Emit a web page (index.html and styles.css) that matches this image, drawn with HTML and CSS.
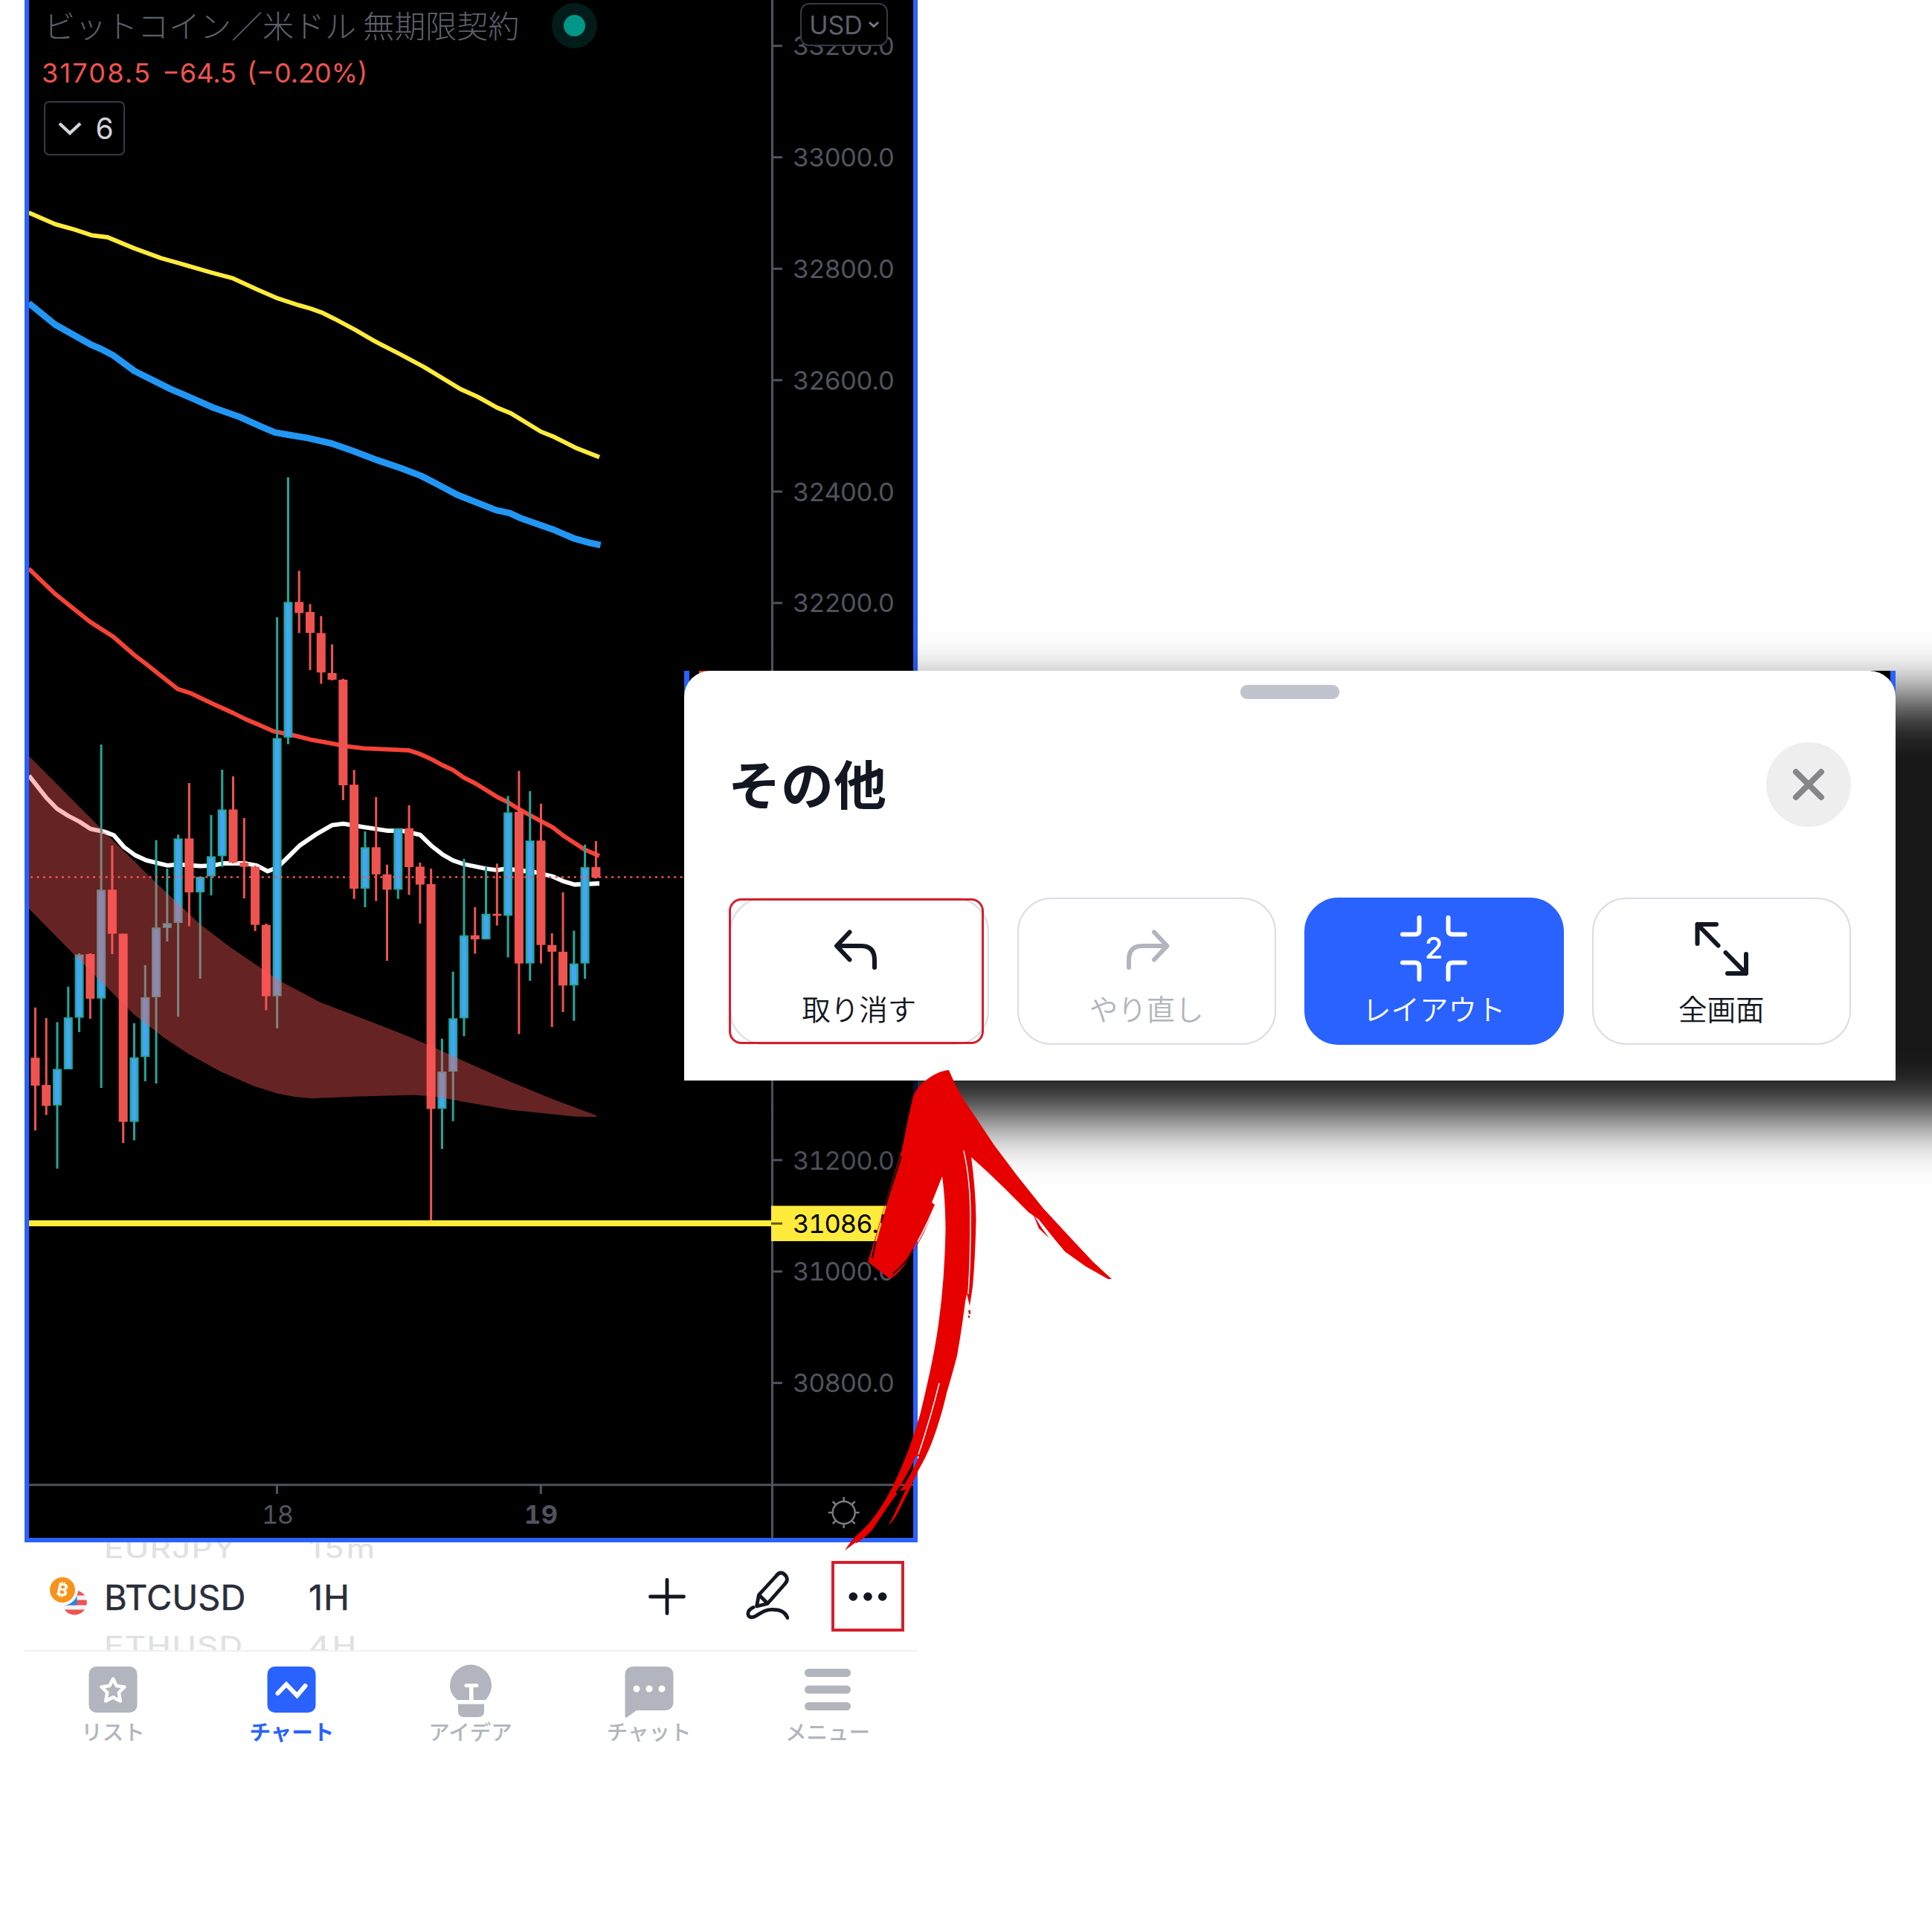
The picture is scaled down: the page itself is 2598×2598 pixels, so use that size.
FILE: index.html
```html
<!DOCTYPE html>
<html lang="ja">
<head>
    <meta charset="UTF-8">
    <meta name="viewport" content="width=device-width, initial-scale=1.0">
    <title>BTCUSD チャート</title>
    <link rel="stylesheet" href="styles.css">
</head>
<body>
    <div class="phone">
        <div class="chart">
            <svg class="chart-canvas" viewBox="39 0 1189 2068">
                <!-- moving averages -->
                <polyline class="ma ma-yellow" points="38.6,285.9 74,301.4 100.4,308.8 123,316.3 144.6,319 180.8,334 217,347.3 241,354 285,366.8 313.4,374.3 345.5,389.2 373.7,401.3 401.8,410.4 417.9,415 434,420.8 450,428.8 478,443.7 504.7,459.2 538.4,476.5 570.6,493.7 618.8,523 642.9,533.9 668.6,548.2 687,555.7 727.3,580.4 745.7,587.8 775.5,602.8 806,614.8"/>
                <polyline class="ma ma-blue" points="38.6,407.6 74,436.3 123,463.8 136.6,469.6 152.7,478.2 180.8,498.9 229,523 257,535 285.3,547.6 321.4,560.3 349.6,572.9 369.7,581.5 385.7,584.4 413.9,589 446,596.4 474,606.2 506,618.3 538,629.2 566.5,640 586.6,650.4 614.8,665.3 667,686 685.5,690 699,696.3 743,711.8 771.5,723.9 791.5,729.6 807.6,733"/>
                <polyline class="ma ma-red" points="38.6,764.6 74,798.5 120.5,835.8 152.7,856.5 180.8,881 196.7,893 213,906 239,926.5 256.7,932.3 286.7,946.6 313,958.5 330,967 346.7,974 368,983.3 393,988.4 416.7,994.3 446.7,999.8 466.7,1003.6 490,1006.3 536.7,1008.4 550,1009 565,1014 580,1020.8 595,1029 609,1035.3 623.7,1045.6 640,1053.9 668.7,1071.8 683,1078.7 697,1087.6 727,1104 743,1112.4 758,1124 786.7,1142.7 806,1151"/>
                <polyline class="ma ma-white" points="39,1043 62.3,1072.8 76.7,1087.5 91.7,1097 107,1105 121.7,1114.6 140,1118.3 153.3,1123.3 166.7,1139 181.7,1150 196.7,1156.9 225,1163.8 239,1162.4 270,1164.7 286.7,1163.8 300,1161 330,1161 345,1163.8 360,1171.6 373,1166.5 383,1156.9 403,1137 425,1122 446.7,1109.6 461.7,1107.7 490,1112.4 521.7,1117.2 540,1117 565,1122.7 580,1137.2 595,1148.9 609,1157 623.7,1162 653,1168 668.7,1170.2 680,1168.2 695,1170 720,1173 743,1178.5 756.7,1184.7 772.3,1189.5 806,1188"/>

                <g id="candles"></g>

                <!-- cloud -->
                <path class="cloud" d="M39,1016.8 L136.7,1115 L206.7,1184 L269,1242.7 L310,1274 L353,1303.3 L380,1321 L430,1347.4 L480,1366.7 L540,1390 L583,1407.9 L623,1426.4 L686.7,1454.7 L740,1476.7 L802,1500 L802,1502 L773,1501.5 L686.7,1492.6 L620,1480.9 L586.7,1474.7 L556.7,1472.6 L480,1474.6 L420,1477 L396.7,1475 L373,1470.5 L340,1460 L296.7,1441 L253,1417 L220,1395 L180,1364 L160,1344 L100,1284 L39,1222 Z"/>

                <line class="last-price" x1="41" y1="1179.5" x2="1037" y2="1179.5"/>
                <line class="level" x1="39" y1="1645" x2="1037" y2="1645"/>

                <!-- axes -->
                <path class="axis" d="M1038.5,0 V2068 M39,1996.8 H1228 M372.5,1998 V2009 M727.3,1998 V2009"/>
                <g id="scale"></g>
                <rect class="level-tag" x="1037" y="1621.5" width="191" height="47.5"/>
                <path class="level-tick" d="M1037,1645.3 H1052"/>
                <text class="tick level-text" x="1066" y="1657.5" textLength="137">31086.5</text>
                <text class="tick" x="352" y="2048.500" textLength="43">18</text>
                <text class="tick tick-bold" x="705" y="2048.500" textLength="45">19</text>

                <g class="gear" transform="translate(1134.7 2034)">
                    <circle r="15"/>
                    <path d="M0-15V-21 M0 15V21 M-15 0H-21 M15 0H21 M-10.6-10.6L-15-15 M10.6-10.6L15-15 M-10.6 10.6L-15 15 M10.6 10.6L15 15"/>
                </g>
            </svg>

            <div class="legend">
                <div class="legend-title">
                    <span>ビットコイン／米ドル 無期限契約</span>
                    <i class="status"></i>
                </div>
                <div class="legend-price">
                    <span class="last">31708.5</span>
                    <span>−64.5</span>
                    <span>(−0.20%)</span>
                </div>
                <button class="collapse">
                    <svg width="36" height="24" viewBox="0 0 36 24"><path d="M4 5L18 18L32 5"/></svg>
                    6
                </button>
            </div>

            <button class="currency">
                USD
                <svg width="18" height="12" viewBox="0 0 18 12"><path d="M3 3L9 8.5L15 3"/></svg>
            </button>
        </div>

        <div class="toolbar">
            <svg class="pair" width="72" height="72" viewBox="0 0 72 72">
                <defs>
                    <clipPath id="flag"><circle cx="41.3" cy="44" r="16.5"/></clipPath>
                </defs>
                <g clip-path="url(#flag)">
                    <rect x="20" y="24" width="40" height="40" fill="#f0f3fa"/>
                    <path fill="#ef5350" d="M20 28H60V34.500H20Z M20 40.500H60V47.500H20Z M20 53.500H60V62H20Z"/>
                    <rect x="20" y="24" width="24.500" height="23.500" fill="#1e88e5"/>
                </g>
                <circle cx="25" cy="27" r="21" fill="#fff"/>
                <circle cx="25" cy="27" r="17" fill="#f7931a"/>
                <text class="coin" x="25" y="35" transform="rotate(12 25 27)">₿</text>
            </svg>
            <div class="wheel wheel-symbol">
                <span class="dim">EURJPY</span>
                <span class="current">BTCUSD</span>
                <span class="dim">ETHUSD</span>
            </div>
            <div class="wheel wheel-interval">
                <span class="dim">15m</span>
                <span class="current">1H</span>
                <span class="dim">4H</span>
            </div>
            <div class="tools">
                <svg width="60" height="70" viewBox="-30 -35 60 70"><path d="M-22.500 0H22.500 M0-22.500V22.500"/></svg>
                <svg width="60" height="70" viewBox="0 0 60 70">
                    <path d="M16.500 48L19.500 32.500L42.500 7.500Q49-1.500 56 7.500Q59.500 13 54 18.500L31 44.500Z M20 33L31 44"/>
                    <path d="M12 49.500C2 54 3 64.500 12 62.500C19 60 26 51.500 39 52.500C49 52.500 55.500 57 58 63.500"/>
                </svg>
                <button class="more">
                    <svg width="60" height="20" viewBox="-30 -10 60 20">
                        <circle cx="-19.700" r="5.800"/><circle r="5.800"/><circle cx="19.700" r="5.800"/>
                    </svg>
                </button>
            </div>
        </div>

        <div class="tabs">
            <div class="tab">
                <svg width="80" height="80" viewBox="-40 -40 80 80">
                    <rect x="-32.500" y="-31" width="65" height="62" rx="10"/>
                    <path class="line" d="M0-14.500L4.700-5L15.500-3.500L7.800 4L9.800 15.500L0 10.300L-9.800 15.500L-7.800 4L-15.500-3.500L-4.700-5Z"/>
                </svg>
                リスト
            </div>
            <div class="tab active">
                <svg width="80" height="80" viewBox="-40 -40 80 80">
                    <rect x="-32.500" y="-31" width="65" height="62" rx="10"/>
                    <path class="line thick" d="M-18.500 5L-7 -7L7.500 8L18.500-5"/>
                </svg>
                チャート
            </div>
            <div class="tab">
                <svg width="80" height="80" viewBox="-40 -40 80 80">
                    <path d="M-18 14C-25 8-28 2-28-5.500A28 28 0 0 1 28-5.500C28 2 25 8 20 14H3.500V-3H8A2.500 2.500 0 0 0 8-8H-6A2.500 2.500 0 0 0-6-3H-2V14Z M-17 19.500H18V29Q18 37 10 37H-9Q-17 37-17 29Z"/>
                </svg>
                アイデア
            </div>
            <div class="tab">
                <svg width="80" height="80" viewBox="-40 -40 80 80">
                    <path d="M-32.500-19Q-32.500-31-20.500-31H20.500Q32.500-31 32.500-19V16Q32.500 28 20.500 28H-17L-31 38Q-32.500 38-32.500 36Z"/>
                    <g class="holes"><circle cx="-17" cy="-1" r="4.500"/><circle cy="-1" r="4.500"/><circle cx="17" cy="-1" r="4.500"/></g>
                </svg>
                チャット
            </div>
            <div class="tab">
                <svg width="80" height="80" viewBox="-40 -40 80 80">
                    <rect x="-31" y="-28" width="62" height="11" rx="5.500"/>
                    <rect x="-31" y="-5.500" width="62" height="11" rx="5.500"/>
                    <rect x="-31" y="17" width="62" height="11" rx="5.500"/>
                </svg>
                メニュー
            </div>
        </div>
    </div>

    <div class="sheet-wrap">
        <div class="sheet">
            <div class="handle"></div>
            <div class="sheet-header">
                <h1>その他</h1>
                <button class="close">
                    <svg width="48" height="48" viewBox="-24 -24 48 48"><path d="M-17-17L17 17M17-17L-17 17"/></svg>
                </button>
            </div>
            <div class="actions">
                <button class="action highlighted">
                    <svg width="100" height="100" viewBox="-50 -50 100 100"><path d="M-12.500-22.500L-30-4L-12.500 14.500M-29-4H3Q21-4 21 15V25"/></svg>
                    <span>取り消す</span>
                </button>
                <button class="action disabled">
                    <svg width="100" height="100" viewBox="-50 -50 100 100"><path d="M10-22.500L27.500-4L10 14.500M26.500-4H-6Q-24-4-24 15V25"/></svg>
                    <span>やり直し</span>
                </button>
                <button class="action primary">
                    <svg width="100" height="100" viewBox="-50 -50 100 100">
                        <path d="M-42-19.500H-25Q-19.500-19.500-19.500-25V-42 M42-19.500H25Q19.500-19.500 19.500-25V-42 M-42 18.500H-25Q-19.500 18.500-19.500 24V41 M42 18.500H25Q19.500 18.500 19.500 24V41"/>
                        <text class="layout-count" x="0" y="13">2</text>
                    </svg>
                    <span>レイアウト</span>
                </button>
                <button class="action">
                    <svg width="100" height="100" viewBox="-50 -50 100 100"><path d="M-7-33H-32.500V-7M-32.500-33L-4.500-4.500M8 33H33V7M33 33L5.500 5"/></svg>
                    <span>全画面</span>
                </button>
            </div>
        </div>
    </div>

    <!-- brush arrow pointing at the undo button -->
    <svg class="arrow" viewBox="1130 1430 370 660">
        <mask id="streaks">
            <rect x="1130" y="1430" width="370" height="660" fill="#fff"/>
            <g fill="none" stroke="#000">
                <path stroke-width="1.500" d="M1295.700,1547 Q1304,1580 1305,1630 Q1305.500,1690 1302,1740"/>
                <path stroke-width="2" d="M1212,1555 L1193,1614 L1178,1668 L1173,1692"/>
                <path stroke-width="1.800" d="M1257,1622 Q1240,1662 1221,1692 Q1210,1706 1199,1714"/>
                <path stroke-width="1.500" d="M1263,1860 Q1252,1905 1235,1956"/>
                <path stroke-width="4" d="M1234,1958 Q1222,1985 1206,2008"/>
            </g>
        </mask>
        <g mask="url(#streaks)">
            <path d="M1276,1439 L1283,1455 Q1294,1477 1307,1495 L1337,1540 L1367,1580 L1403,1625 L1440,1665 L1470,1697 L1495,1720 L1490,1720 L1460,1703 L1432,1683 L1417,1665 L1397,1640 L1383,1630 L1350,1597 L1327,1575 L1306,1556 Q1312,1600 1312.500,1640 Q1311.500,1690 1308,1730 L1304,1756 L1300,1740 L1298,1750 Q1293,1790 1287,1823 Q1280,1850 1273,1873 Q1266,1905 1253,1940 Q1245,1960 1235,1977 L1223,2003 L1208,2033 Q1201,2046 1195,2051 L1203,2035 L1218,2003 L1208,2006 L1193,2027 L1173,2057 Q1160,2071 1150,2076 L1152,2073 L1136,2085 Q1145,2070 1157,2060 Q1178,2042 1200,2000 Q1222,1955 1237,1903 Q1250,1850 1257,1812 Q1270,1740 1271.500,1653 Q1271,1610 1267,1582 L1253,1617 L1257,1620 Q1245,1660 1221,1694 Q1210,1712 1197,1720 L1167,1697 L1177,1664 L1193,1609 L1213,1545 L1222,1500 L1228,1474 Q1232,1464 1242,1455 Q1260,1440 1276,1439 Z"/>
        </g>
        <path d="M1389,1632 L1400,1650 L1411,1665 L1397,1652 Z M1302,1762 L1305,1762 L1305,1767 L1303,1767 Z M1302,1769 L1304,1769 L1304,1772 L1302,1772 Z"/>
    </svg>

    <script src="script.js"></script>
</body>
</html>
```

FILE: script.js
```js
// [up, bodyTop, bodyBottom, wickTop, wickBottom]
const candles = [
    [0, 1422.3, 1459.9, 1354.8, 1520.1],
    [0, 1459, 1487, 1369, 1499.4],
    [1, 1437.4, 1486.6, 1374.5, 1571.5],
    [1, 1368, 1438, 1326.8, 1438],
    [1, 1283.6, 1368.6, 1282, 1387.9],
    [0, 1283, 1343, 1282, 1370],
    [1, 1196.4, 1342.8, 1001.2, 1463],
    [0, 1196.4, 1255.6, 1137, 1283],
    [0, 1255.6, 1508.6, 1255.6, 1537],
    [1, 1421.8, 1508.6, 1376, 1533.4],
    [1, 1341, 1421.4, 1298, 1454],
    [1, 1247.3, 1341, 1129.8, 1457],
    [1, 1241.4, 1247.8, 1168, 1266],
    [1, 1127.5, 1241, 1122.4, 1367],
    [0, 1127.5, 1200, 1053, 1245.5],
    [1, 1179, 1200, 1179, 1316],
    [1, 1151.4, 1178.5, 1096, 1204],
    [1, 1088.5, 1151.4, 1035, 1165.6],
    [0, 1088.5, 1160, 1044, 1161],
    [0, 1160, 1165.6, 1100, 1208],
    [0, 1165.6, 1243.7, 1164, 1252],
    [0, 1243.7, 1339.6, 1242, 1358.5],
    [1, 992.5, 1339.6, 830, 1382.8],
    [1, 809.4, 992, 641.8, 1000.8],
    [0, 809.4, 824.3, 767.5, 851.3],
    [0, 823, 851, 812.3, 901],
    [0, 851.3, 904.3, 828.4, 919.5],
    [0, 905, 914, 866.5, 915],
    [0, 914, 1056, 912.7, 1076],
    [0, 1055.2, 1195, 1035.3, 1208.8],
    [1, 1139.3, 1195, 1118, 1220],
    [0, 1139.3, 1175.8, 1071.8, 1211.6],
    [0, 1175.8, 1196.4, 1162.7, 1292],
    [1, 1113.8, 1196.4, 1113.8, 1208.8],
    [0, 1113.8, 1166, 1082.8, 1203.3],
    [0, 1165.4, 1189.5, 1160, 1242],
    [0, 1188.8, 1491.2, 1168.2, 1641],
    [1, 1441, 1491, 1396.8, 1545],
    [1, 1369.3, 1441, 1306.6, 1507.7],
    [1, 1257.7, 1369.3, 1155, 1393.4],
    [0, 1257.7, 1263.2, 1219.8, 1282.5],
    [1, 1228.8, 1263.2, 1166, 1263.2],
    [0, 1228.8, 1231.5, 1161.3, 1244.6],
    [1, 1092.4, 1231.5, 1070.4, 1287.3],
    [0, 1091.7, 1295.6, 1036.6, 1390.6],
    [1, 1130.3, 1295.6, 1064, 1319],
    [0, 1130.3, 1270.8, 1080.7, 1295.6],
    [0, 1270.8, 1279.8, 1255, 1381],
    [0, 1279.8, 1325.2, 1199.9, 1361],
    [1, 1295.6, 1325.2, 1251.5, 1372.7],
    [1, 1166, 1295.6, 1135.8, 1316.3],
    [0, 1166, 1180, 1131, 1181.3]
];

const FIRST_X = 47.4;
const STEP = 14.784;

let html = '';
candles.forEach(([up, top, bottom, high, low], i) => {
    const x = FIRST_X + i * STEP;
    const h = bottom - top;
    html += `<g class="${up ? 'up' : 'down'}">`;
    html += `<rect x="${x - 1.5}" y="${high}" width="3" height="${low - high}"/>`;
    html += `<rect x="${x - 6}" y="${top}" width="12" height="${h}"/>`;
    if (up) {
        html += `<rect class="fill" x="${x - 3.4}" y="${top + 2}" width="6.8" height="${h - 4}"/>`;
    }
    html += '</g>';
});
document.getElementById('candles').innerHTML = html;

// price scale, 149.83px for every 200 (32000 - 31400 are under the sheet)
const prices = [33200, 33000, 32800, 32600, 32400, 32200, 31200, 31000, 30800];
document.getElementById('scale').innerHTML = prices.map(price => {
    const y = 61.7 + (33200 - price) / 200 * 149.83;
    return `<path class="axis" d="M1040,${y}H1052"/>` +
        `<text class="tick" x="1066" y="${y + 12.5}" textLength="137">${price}.0</text>`;
}).join('');
```

FILE: styles.css
```css
* {
    box-sizing: border-box;
    margin: 0;
    padding: 0;
}

body {
    width: 2598px;
    height: 2598px;
    overflow: hidden;
    position: relative;
    background: #fff;
    font-family: Inter, "Noto Sans CJK JP", sans-serif;
}

button {
    background: none;
    border: none;
    font: inherit;
    color: inherit;
}

svg {
    display: block;
    flex: none;
}

.phone {
    width: 1201px;
    margin-left: 33px;
}

/* chart */
.chart {
    position: relative;
    height: 2074px;
    background: #000;
    border: 6px solid #2962ff;
    border-top: none;
}

.chart-canvas {
    width: 100%;
    height: 100%;
}

.ma {
    fill: none;
    stroke-width: 5.8;
    stroke-linejoin: round;
}

.ma-yellow {
    stroke: #ffeb3b;
}

.ma-blue {
    stroke: #2196f3;
    stroke-width: 8.8;
}

.ma-red {
    stroke: #f44336;
}

.ma-white {
    stroke: #fff;
}

.up {
    fill: #26a69a;
}

.up .fill {
    fill: #42a5f5;
}

.down {
    fill: #ef5350;
}

.cloud {
    fill: rgba(255, 88, 88, 0.4);
}

.last-price {
    stroke: #ef5350;
    stroke-width: 2.5;
    stroke-dasharray: 3 5.4;
}

.level {
    stroke: #ffeb3b;
    stroke-width: 8;
}

.level-tag {
    fill: #ffeb3b;
}

.level-tick {
    stroke: #665e18;
    stroke-width: 3;
}

.axis {
    fill: none;
    stroke: #50535e;
    stroke-width: 3;
}

.tick {
    font-size: 34.5px;
    font-feature-settings: "tnum";
    fill: #50535e;
}

.tick-bold {
    font-weight: 700;
}

.level-text {
    fill: #000;
}

.gear {
    fill: none;
    stroke: #787b86;
    stroke-width: 2.5;
}

.legend {
    position: absolute;
    top: 7px;
    left: 20px;
}

.legend-title {
    display: flex;
    align-items: center;
    gap: 60px;
    height: 54px;
    font-family: "Noto Sans CJK JP", sans-serif;
    font-weight: 300;
    font-size: 42px;
    line-height: 54px;
    color: #5d606b;
}

.legend-title span {
    margin-top: -3px;
}

.status {
    width: 29px;
    height: 29px;
    border-radius: 50%;
    background: #009688;
    box-shadow: 0 0 0 16px #031c19;
}

.legend-price {
    display: flex;
    gap: 14px;
    margin: 19px 0 0 -3px;
    font-size: 36px;
    line-height: 36px;
    color: #ef5350;
}

.legend-price .last {
    letter-spacing: 2.2px;
}

.collapse {
    display: flex;
    align-items: center;
    justify-content: center;
    gap: 16px;
    width: 109px;
    height: 73px;
    margin-top: 20px;
    padding-left: 2px;
    border: 2.5px solid #363a45;
    border-radius: 7px;
    font-size: 39px;
    color: #d1d4dc;
}

.collapse path {
    fill: none;
    stroke: #d1d4dc;
    stroke-width: 4.4;
}

.currency {
    position: absolute;
    top: 4px;
    right: 34px;
    display: flex;
    align-items: center;
    justify-content: center;
    gap: 6px;
    width: 118px;
    height: 58px;
    padding-left: 2px;
    background: #000;
    border: 2.5px solid #363a45;
    border-radius: 12px;
    font-size: 34px;
    color: #5d606b;
}

.currency path {
    fill: none;
    stroke: #787b86;
    stroke-width: 3;
}

/* symbol bar */
.toolbar {
    display: flex;
    align-items: center;
    height: 147px;
    padding: 0 18px 0 26px;
    border-bottom: 2px solid #f0f1f3;
}

.coin {
    font-size: 23px;
    font-weight: 700;
    text-anchor: middle;
    fill: #fff;
}

.wheel {
    display: flex;
    flex-direction: column;
    justify-content: center;
    height: 145px;
    overflow: hidden;
    font-size: 47px;
    color: #2a2e39;
}

.wheel span {
    flex: none;
    height: 65.5px;
    line-height: 67px;
    -webkit-text-stroke: 0.5px currentColor;
}

.wheel .dim {
    font-size: 44px;
    letter-spacing: 1.2px;
    color: #e0e1e3;
    line-height: 68px;
    transform: scaleY(0.8);
}

.wheel-symbol {
    width: 275px;
    margin-left: 9px;
}

.wheel-interval {
    width: 170px;
    letter-spacing: 1px;
}

.wheel-interval .dim {
    letter-spacing: 3px;
}

.tools {
    display: flex;
    align-items: center;
    gap: 58px;
    margin-left: auto;
    fill: none;
    stroke: #131722;
    stroke-width: 4.8;
    stroke-linecap: round;
    stroke-linejoin: round;
}

.tools svg + svg {
    margin-left: 16px;
}

.more {
    display: flex;
    align-items: center;
    justify-content: center;
    width: 98px;
    height: 95px;
    margin-left: -1px;
    border: 4px solid #d41f2d;
}

.more svg {
    fill: #131722;
    stroke: none;
}

/* bottom tabs */
.tabs {
    display: flex;
    padding-top: 11px;
    margin: 0 1px 0 -1px;
}

.tab {
    flex: 1;
    display: flex;
    flex-direction: column;
    align-items: center;
    font-family: "Noto Sans CJK JP", sans-serif;
    font-weight: 500;
    font-size: 28.5px;
    line-height: 32px;
    color: #b2b5be;
    fill: currentColor;
}

.tab.active {
    color: #2962ff;
    font-weight: 700;
}

.tab .line {
    fill: none;
    stroke: #fff;
    stroke-width: 4.5;
    stroke-linecap: round;
    stroke-linejoin: round;
}

.tab .thick {
    stroke-width: 6;
    stroke-linejoin: miter;
}

.tab .holes {
    fill: #fff;
}

/* bottom sheet */
.sheet-wrap {
    position: absolute;
    top: 902px;
    left: 920px;
    width: 1629px;
    height: 551px;
    background:
        linear-gradient(#2962ff, #2962ff) 0 0 / 7px 60px no-repeat,
        linear-gradient(#2962ff, #2962ff) 100% 0 / 7px 60px no-repeat,
        linear-gradient(#f44336, #f44336) 20px 0 / 14px 4px no-repeat,
        #000;
    box-shadow: 180px 43px 72px 8px rgba(0, 0, 0, 0.91);
}

.sheet {
    height: 100%;
    padding: 19px 60px 0 61px;
    background: #fff;
    border-radius: 35px 35px 0 0;
}

.handle {
    width: 133px;
    height: 19px;
    margin: 0 auto;
    border-radius: 9px;
    background: #c1c4cd;
    transform: translateX(-1px);
}

.sheet-header {
    display: flex;
    align-items: center;
    justify-content: space-between;
    margin-top: 58px;
}

.sheet-header h1 {
    margin: -9px 0 0 -2px;
    font-family: "Noto Sans CJK JP", sans-serif;
    font-size: 71px;
    line-height: 100px;
    font-weight: 700;
    color: #131722;
}

.close {
    display: flex;
    align-items: center;
    justify-content: center;
    width: 114px;
    height: 114px;
    border-radius: 50%;
    background: #eee;
}

.close path {
    stroke: #868689;
    stroke-width: 8;
    stroke-linecap: round;
}

.actions {
    display: grid;
    grid-template-columns: repeat(4, 1fr);
    gap: 38px;
    margin-top: 95px;
}

.action {
    position: relative;
    display: flex;
    flex-direction: column;
    align-items: center;
    gap: 9px;
    height: 198px;
    padding-top: 17px;
    border: 2px solid #dbdde4;
    border-radius: 46px;
    font-family: "Noto Sans CJK JP", sans-serif;
    font-weight: 350;
    font-size: 38.5px;
    line-height: 40px;
    color: #131722;
}

.action path {
    fill: none;
    stroke: currentColor;
    stroke-width: 6;
    stroke-linecap: round;
    stroke-linejoin: round;
}

.action.disabled {
    color: #b2b5be;
}

.action.primary {
    color: #fff;
    background: #2962ff;
    border-color: #2962ff;
}

.action.highlighted::after {
    content: '';
    box-sizing: border-box;
    position: absolute;
    top: -1px;
    left: -3px;
    width: 343px;
    height: 196px;
    border: 3.5px solid #d41f2d;
    border-radius: 17px;
}

.layout-count {
    font-family: Inter, sans-serif;
    font-size: 40px;
    font-weight: 500;
    text-anchor: middle;
    fill: currentColor;
}

.arrow {
    position: absolute;
    top: 1430px;
    left: 1130px;
    width: 370px;
    height: 660px;
    fill: #e60000;
}
```
